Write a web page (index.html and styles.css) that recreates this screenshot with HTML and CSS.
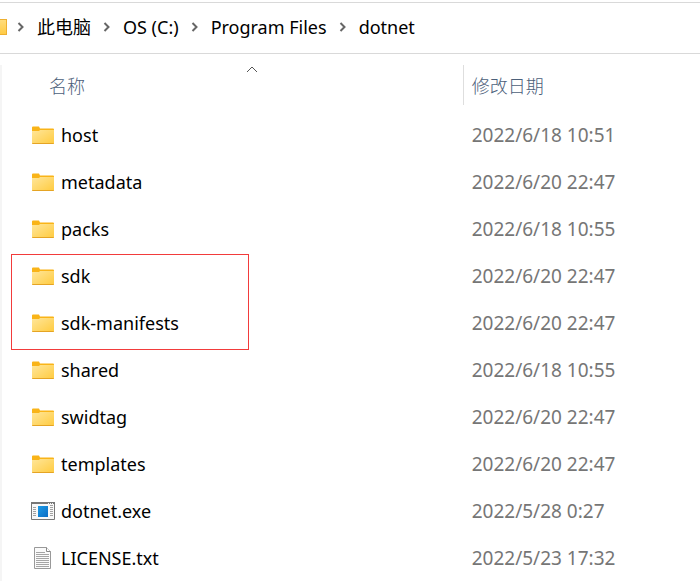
FILE: index.html
```html
<!DOCTYPE html>
<html lang="zh-CN">
<head>
<meta charset="utf-8">
<title>dotnet</title>
<link rel="stylesheet" href="styles.css">
</head>
<body>
<svg class="defs" aria-hidden="true">
  <defs>
    <linearGradient id="folder-fill" x1="0" y1="0" x2="1" y2="1">
      <stop offset="0" stop-color="#ffe69a"/>
      <stop offset="1" stop-color="#ffcb3f"/>
    </linearGradient>
    <linearGradient id="app-fill" x1="0" y1="0" x2="1" y2="1">
      <stop offset="0" stop-color="#1c9be6"/>
      <stop offset="1" stop-color="#0b6cc4"/>
    </linearGradient>
    <symbol id="folder" viewBox="0 0 24 24">
      <path d="M1 4.500a1 1 0 0 1 1-1h6l1 2h13a1 1 0 0 1 1 1v3H1z" fill="#f9b418"/>
      <path d="M1 8h7l1-1h14v13a1 1 0 0 1-1 1H2a1 1 0 0 1-1-1z" fill="url(#folder-fill)"/>
      <path d="M1 20h22a1 1 0 0 1-1 1H2a1 1 0 0 1-1-1z" fill="#e5a424"/>
    </symbol>
    <symbol id="app" viewBox="0 0 24 24">
      <path d="M.5 3.500h23v17H.5z" fill="#f8f8f8" stroke="#777"/>
      <path d="M0 3h24v2H0z" fill="#777"/>
      <path d="M17 4.500h1m1 0h1m1 0h1" stroke="#eee"/>
      <path d="M2 8.500h3m-3 2h3m-3 2h3m-3 2h3m-3 2h3M19 6.500h3m-3 2h3m-3 2h3m-3 2h3m-3 2h3m-3 2h3" stroke="#a2a2a2"/>
      <path d="M7 7h10v11H7z" fill="url(#app-fill)"/>
    </symbol>
    <symbol id="text" viewBox="0 0 24 24">
      <path d="M3.500 1.500h12l4 4v17h-16z" fill="#fafafa" stroke="#999"/>
      <path d="M15.500 1.500v4h4" fill="#fff" stroke="#888"/>
      <path d="M5 6.500h9m-9 2h13m-13 2h13m-13 2h13m-13 2h13m-13 2h13m-13 2h13m-13 2h13" stroke="#a5a5a5"/>
    </symbol>
    <symbol id="chevron" viewBox="0 0 8 10">
      <path d="M1.500 1l4 4-4 4" fill="none" stroke="#666" stroke-width="2"/>
    </symbol>
  </defs>
</svg>

<nav class="address" aria-label="路径">
  <span class="address-icon"></span>
  <svg class="chevron"><use href="#chevron"/></svg>
  <a href="#">此电脑</a>
  <svg class="chevron"><use href="#chevron"/></svg>
  <a href="#">OS (C:)</a>
  <svg class="chevron"><use href="#chevron"/></svg>
  <a href="#">Program Files</a>
  <svg class="chevron"><use href="#chevron"/></svg>
  <a href="#">dotnet</a>
</nav>

<main class="pane">
  <table class="files">
    <thead>
      <tr>
        <th class="name-column" aria-sort="ascending">
          <button class="sort" type="button">名称</button>
          <svg class="sort-mark" viewBox="0 0 12 7"><path d="M1 6l5-5 5 5" fill="none" stroke="#555"/></svg>
        </th>
        <th class="date-column"><button class="sort" type="button">修改日期</button></th>
      </tr>
    </thead>
    <tbody>
      <tr><td><div class="entry"><svg class="icon"><use href="#folder"/></svg>host</div></td><td class="date">2022/6/18 10:51</td></tr>
      <tr><td><div class="entry"><svg class="icon"><use href="#folder"/></svg>metadata</div></td><td class="date">2022/6/20 22:47</td></tr>
      <tr><td><div class="entry"><svg class="icon"><use href="#folder"/></svg>packs</div></td><td class="date">2022/6/18 10:55</td></tr>
      <tr><td class="marked"><div class="entry"><svg class="icon"><use href="#folder"/></svg>sdk</div></td><td class="date">2022/6/20 22:47</td></tr>
      <tr><td><div class="entry"><svg class="icon"><use href="#folder"/></svg>sdk-manifests</div></td><td class="date">2022/6/20 22:47</td></tr>
      <tr><td><div class="entry"><svg class="icon"><use href="#folder"/></svg>shared</div></td><td class="date">2022/6/18 10:55</td></tr>
      <tr><td><div class="entry"><svg class="icon"><use href="#folder"/></svg>swidtag</div></td><td class="date">2022/6/20 22:47</td></tr>
      <tr><td><div class="entry"><svg class="icon"><use href="#folder"/></svg>templates</div></td><td class="date">2022/6/20 22:47</td></tr>
      <tr><td><div class="entry"><svg class="icon"><use href="#app"/></svg>dotnet.exe</div></td><td class="date">2022/5/28 0:27</td></tr>
      <tr><td><div class="entry"><svg class="icon"><use href="#text"/></svg>LICENSE.txt</div></td><td class="date">2022/5/23 17:32</td></tr>
    </tbody>
  </table>
</main>
</body>
</html>
```
FILE: styles.css
```css
*,
*::before,
*::after {
  box-sizing: border-box;
}

body {
  margin: 0;
  background: #fff;
  color: #000;
  font: 18px/24px "Noto Sans", "Noto Sans CJK SC", sans-serif;
}

.defs {
  position: absolute;
  width: 0;
  height: 0;
}

.address {
  display: flex;
  align-items: center;
  gap: 12px;
  height: 52px;
  margin-top: 2px;
  padding-bottom: 2px;
  border-top: 1px solid #d9d9d9;
  border-bottom: 1px solid #d9d9d9;
  white-space: nowrap;
}

.address a {
  color: inherit;
  text-decoration: none;
}

.address-icon {
  width: 7px;
  height: 16px;
  margin-right: -2px;
  border: 1px solid #eeb030;
  border-left: 0;
  background: linear-gradient(#ffdc7c, #ffcb45);
}

.chevron {
  flex: none;
  width: 8px;
  height: 10px;
}

.pane {
  margin-top: 11px;
  border-left: 2px solid #f5f5f5;
}

.files {
  width: 100%;
  border-collapse: collapse;
  table-layout: fixed;
}

th {
  position: relative;
  height: 46px;
  padding: 0 0 5px;
  text-align: left;
  vertical-align: middle;
}

.name-column {
  width: 66%;
  padding-left: 47px;
}

.date-column {
  padding-left: 9px;
}

.date-column::before {
  content: "";
  position: absolute;
  top: 0;
  left: 0;
  height: 40px;
  border-left: 1px solid #dedede;
}

.sort {
  padding: 0;
  border: 0;
  background: none;
  color: #4c607a;
  font: inherit;
  font-weight: 300;
}

.sort-mark {
  position: absolute;
  top: 1px;
  left: 244px;
  width: 12px;
  height: 7px;
}

td {
  height: 47px;
  padding: 0;
}

.entry {
  display: flex;
  align-items: center;
  gap: 6px;
  padding-left: 29px;
}

.icon {
  flex: none;
  width: 24px;
  height: 24px;
}

.date {
  padding-left: 9px;
  color: #767676;
  font-size: 19px;
}

.marked {
  position: relative;
}

.marked::after {
  content: "";
  position: absolute;
  top: 2px;
  left: 9px;
  width: 238px;
  height: 96px;
  border: 1px solid #f23b3b;
}
```
